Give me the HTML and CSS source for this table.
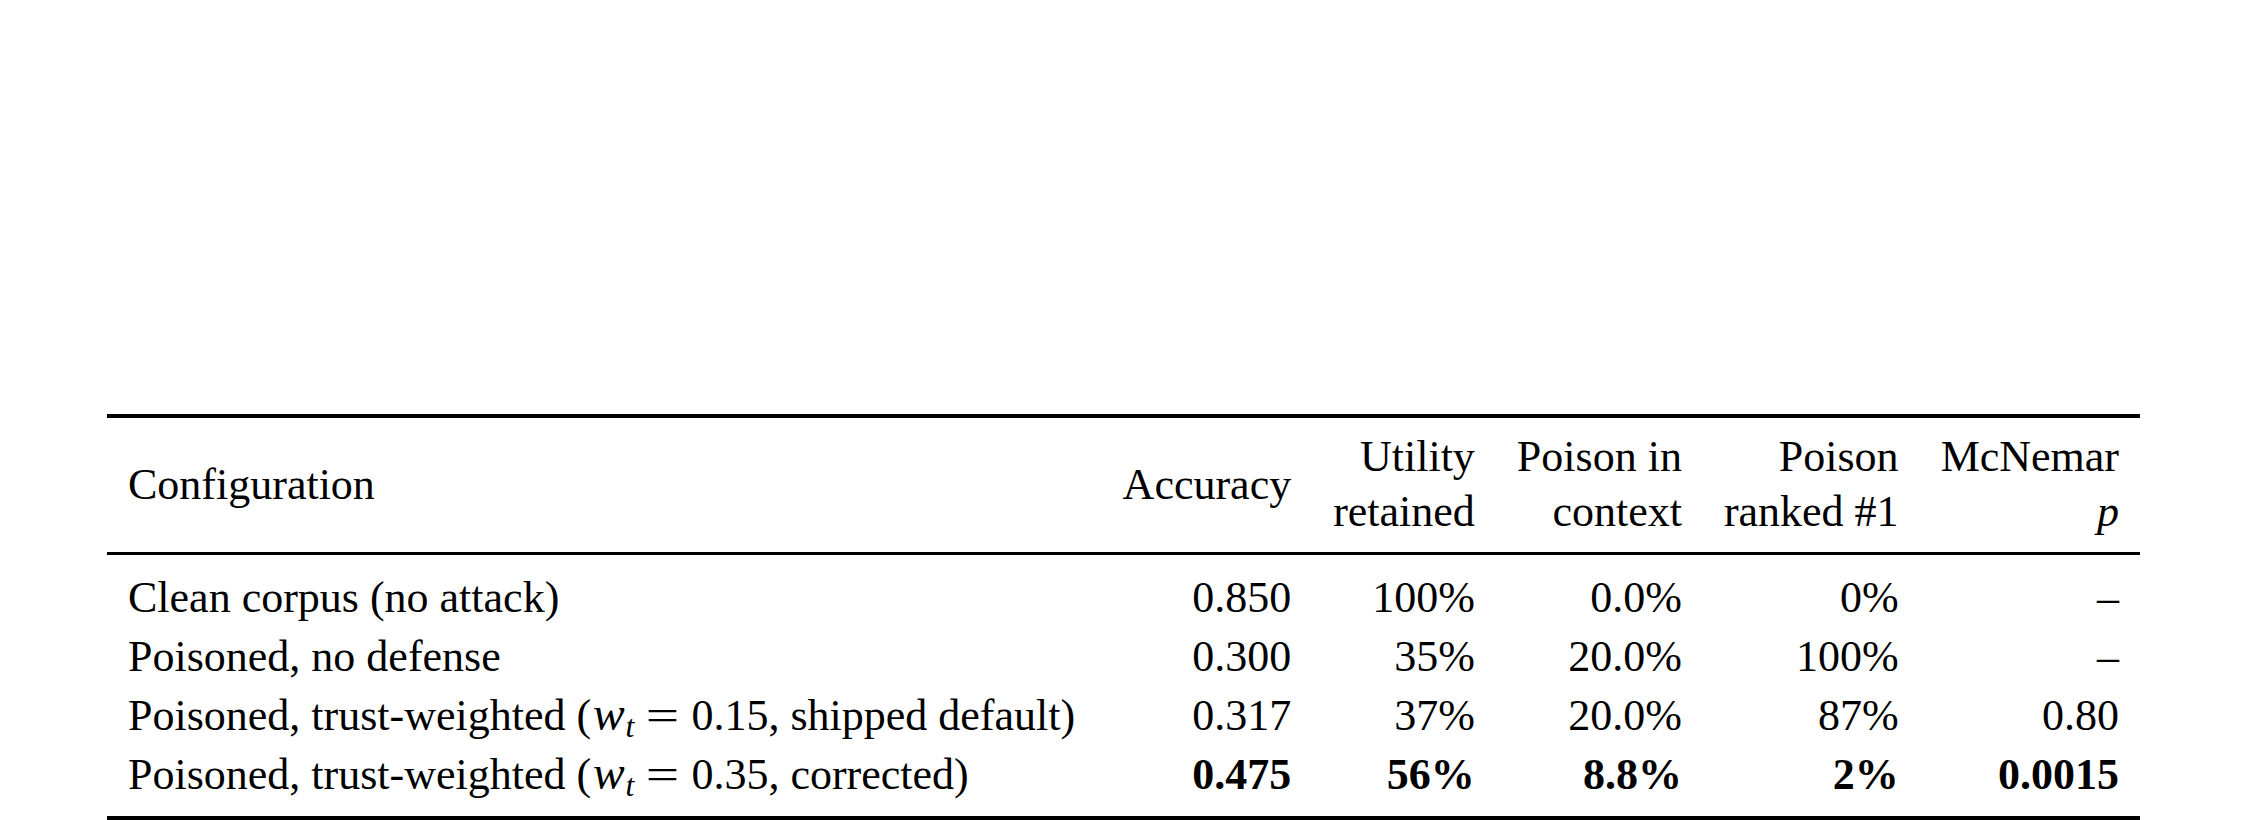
FILE: index.html
```html
<!DOCTYPE html>
<html lang="en">
<head>
<meta charset="utf-8">
<title>Results table</title>
<link rel="stylesheet" href="styles.css">
</head>
<body>
<div class="page">
  <table class="results">
    <thead>
      <tr>
        <th class="left">Configuration</th>
        <th class="num">Accuracy</th>
        <th class="num">Utility<br>retained</th>
        <th class="num">Poison in<br>context</th>
        <th class="num">Poison<br>ranked #1</th>
        <th class="num">McNemar<br><span class="it">p</span></th>
      </tr>
    </thead>
    <tbody>
      <tr>
        <td class="left">Clean corpus (no attack)</td>
        <td class="num">0.850</td>
        <td class="num">100%</td>
        <td class="num">0.0%</td>
        <td class="num">0%</td>
        <td class="num">–</td>
      </tr>
      <tr>
        <td class="left">Poisoned, no defense</td>
        <td class="num">0.300</td>
        <td class="num">35%</td>
        <td class="num">20.0%</td>
        <td class="num">100%</td>
        <td class="num">–</td>
      </tr>
      <tr>
        <td class="left">Poisoned, trust-weighted (<span class="math"><span class="mi">w</span><span class="sub">t</span><span class="eq"><span class="eq-glyph">=</span></span>0.15</span>, shipped default)</td>
        <td class="num">0.317</td>
        <td class="num">37%</td>
        <td class="num">20.0%</td>
        <td class="num">87%</td>
        <td class="num">0.80</td>
      </tr>
      <tr>
        <td class="left">Poisoned, trust-weighted (<span class="math"><span class="mi">w</span><span class="sub">t</span><span class="eq"><span class="eq-glyph">=</span></span>0.35</span>, corrected)</td>
        <td class="num best">0.475</td>
        <td class="num best">56%</td>
        <td class="num best">8.8%</td>
        <td class="num best">2%</td>
        <td class="num best">0.0015</td>
      </tr>
    </tbody>
  </table>
</div>
</body>
</html>
```

FILE: styles.css
```css
html, body {
  margin: 0;
  padding: 0;
  background: #ffffff;
}

body {
  font-family: "Liberation Serif", "Times New Roman", serif;
  color: #000000;
  width: 2260px;
  height: 820px;
  overflow: hidden;
}

.page {
  padding: 414px 0 0 107px;
}

.results {
  width: 2033px;
  border-collapse: separate;
  border-spacing: 0;
  font-size: 44px;
}

.results th,
.results td {
  padding-left: 21px;
  padding-right: 21px;
  white-space: nowrap;
  font-weight: normal;
}

.results th {
  line-height: 55px;
  padding-top: 11px;
  padding-bottom: 13px;
  border-top: 4px solid #000;
  border-bottom: 3px solid #000;
  vertical-align: middle;
}

.results td {
  line-height: 59px;
  padding-top: 0;
  padding-bottom: 0;
  vertical-align: baseline;
}

.results tbody tr:first-child td {
  padding-top: 12.5px;
}

.results tbody tr:last-child td {
  padding-bottom: 12.5px;
  border-bottom: 4px solid #000;
}

.left {
  text-align: left;
}

.num {
  text-align: right;
  width: 1%;
}

.best {
  font-weight: bold !important;
}

.it {
  font-style: italic;
}

.math {
  white-space: nowrap;
}

.mi {
  font-style: italic;
  font-size: 1.08em;
  line-height: 0;
  padding-left: 0.04em;
}

.sub {
  font-style: italic;
  font-size: 0.72em;
  line-height: 0;
  position: relative;
  top: 0.24em;
  padding-left: 0.02em;
}

.eq {
  display: inline-block;
  width: 1.3em;
  text-align: center;
  line-height: 0;
}

.eq-glyph {
  display: inline-block;
  transform: scaleX(1.35);
}
```
